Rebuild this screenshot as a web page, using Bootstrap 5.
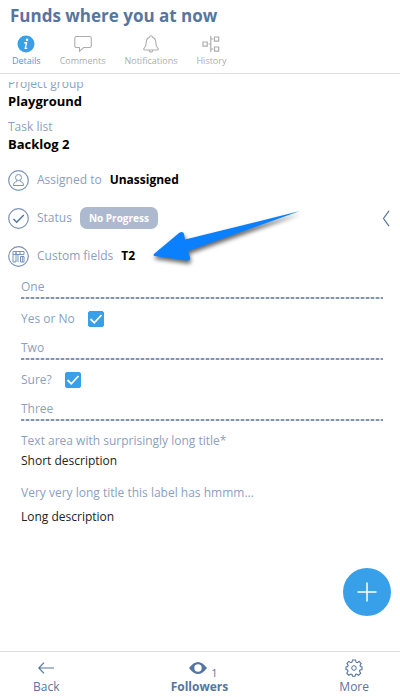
<!DOCTYPE html>
<html lang="en">
<head>
<meta charset="utf-8">
<meta name="viewport" content="width=device-width, initial-scale=1">
<title>Funds where you at now</title>
<link href="https://cdn.jsdelivr.net/npm/bootstrap@5.3.0/dist/css/bootstrap.min.css" rel="stylesheet">
<style>
body{font-family:"Open Sans","Noto Sans",sans-serif;font-size:12px;line-height:16px;color:#000;background:#fff}
svg{display:block;fill:none;stroke:currentColor}
.title{font-size:17px;line-height:24px;font-weight:700;color:#56759f}
.top{border-bottom:1px solid #dedede;padding:4px 10px 6px}
.tabs{gap:19px;margin:7px 2px 0}
.tab{font-size:9px;line-height:12px;color:#adadad;gap:2px}
.tab.active,.tab:hover{color:#37a0e8}
.pane{margin-top:8px}
.scrolled{margin-top:-6px;padding:0 8px}
.muted{color:#8b9fbf}
.strong{font-size:13px;line-height:19px;font-weight:700}
.prop{height:38px;gap:8px}
.ring{width:21px;height:21px;color:#7c93b8}
.status{background:#adb9ce;color:#fff;border:0;border-radius:7px;font-size:10px;line-height:16px;font-weight:700;padding:3px 9px}
.back-chev{color:#56759f;margin-right:2px}
.props{padding-top:7px}
.fields{padding:3px 9px 0 13px}
.line{height:21px;padding-top:1px;background:repeating-linear-gradient(90deg,#7f94b8 0 3px,#d5dce8 3px 5px) left bottom/100% 2px no-repeat}
.check-row{height:40px;gap:13px}
.form-check-input.tick{width:16px;height:16px;margin:0;border-radius:2px}
.tick:checked{background-color:#37a0e8;border-color:#37a0e8;background-size:16px;background-image:url("data:image/svg+xml,%3Csvg xmlns='http://www.w3.org/2000/svg' viewBox='0 0 16 16'%3E%3Cpath d='M2.500 8l3.800 3.800L13.500 4' fill='none' stroke='%23fff' stroke-width='1.800'/%3E%3C/svg%3E")}
.long{color:#222}
.fab{width:48px;height:48px;right:9px;bottom:35px;background:#37a0e8;color:#fff}
.pointer{left:145px;top:120px;pointer-events:none;filter:drop-shadow(1px 3px 2px #0009)}
.bottom{border-top:1px solid #dedede;padding:6px 31px 2px 33px}
.act{color:#56759f;gap:2px}
.act-icon{height:19px}
.count{font-size:11px;line-height:8px}
</style>
</head>
<body>
<div class="vh-100 d-flex flex-column overflow-hidden">
  <header class="top">
    <h1 class="title mb-0">Funds where you at now</h1>
    <nav class="tabs d-flex" aria-label="Sections">
      <a href="#" class="tab active d-flex flex-column align-items-center text-decoration-none">
        <svg width="18" height="18" viewBox="0 0 18 18"><circle cx="9" cy="9" r="8.5" fill="#37a0e8" stroke="none"/><circle cx="10" cy="4.8" r="1.3" fill="#fff" stroke="none"/><path d="M7.2 7.8h2.3l-1.2 5.6h1.9" stroke="#fff" stroke-width="1.4"/></svg>
        <span>Details</span></a>
      <a href="#" class="tab d-flex flex-column align-items-center text-decoration-none">
        <svg width="18" height="18" viewBox="0 0 18 18"><path d="M2.5 1.5h13q1.8 0 1.8 1.8v7.4q0 1.8-1.8 1.8H9.6L5.5 16.3v-3.8h-3Q.8 12.500.8 10.700V3.300Q.8 1.500 2.500 1.500z" stroke-width="1.1"/></svg>
        <span>Comments</span></a>
      <a href="#" class="tab d-flex flex-column align-items-center text-decoration-none">
        <svg width="18" height="18" viewBox="0 0 18 18"><path d="M7.600 2.200a1.400 1.400 0 0 1 2.800 0C13 3 13.800 5 13.800 7.500c0 3.500.7 4.500 2 5.600.9.900.5 1.900-.6 1.900H2.800c-1.100 0-1.500-1-.6-1.900 1.300-1.100 2-2.100 2-5.600C4.200 5 5 3 7.600 2.200zM7 15c.2 2.800 3.800 2.800 4 0" stroke-width="1.1"/></svg>
        <span>Notifications</span></a>
      <a href="#" class="tab d-flex flex-column align-items-center text-decoration-none">
        <svg width="18" height="18" viewBox="0 0 18 18"><path d="M1 7h4.200v4.200H1zM12.500 2h4.200v4.200h-4.200zM12.500 12h4.200v4.200h-4.200zM8.800 1v16M6.500 9h2.300M8.800 4h2.500M8.800 14h2.500" stroke-width="1.200"/></svg>
        <span>History</span></a>
    </nav>
  </header>

  <main class="pane flex-grow-1 overflow-hidden position-relative">
    <div class="scrolled">
      <div class="muted">Project group</div>
      <div class="strong">Playground</div>
      <div class="muted mt-2">Task list</div>
      <div class="strong">Backlog 2</div>
      <div class="props">
        <div class="prop d-flex align-items-center">
          <svg class="ring" viewBox="0 0 21 21"><circle cx="10.500" cy="10.500" r="9.800" stroke-width="1.200"/><circle cx="10.500" cy="7.500" r="3"/><path d="M8.800 10.200v1.300c-2.400.5-3.300 1.600-3.300 4h10c0-2.400-.9-3.500-3.300-4v-1.300"/></svg>
          <span class="muted">Assigned to</span><span class="fw-bold">Unassigned</span>
        </div>
        <div class="prop d-flex align-items-center">
          <svg class="ring" viewBox="0 0 21 21"><circle cx="10.500" cy="10.500" r="9.800" stroke-width="1.200"/><path d="M5.500 11l3.200 3.200L15.800 7" stroke="#56759f" stroke-width="1.500"/></svg>
          <span class="muted">Status</span><button type="button" class="status">No Progress</button>
          <a href="#" class="back-chev ms-auto" aria-label="Open panel"><svg width="8" height="17" viewBox="0 0 8 17"><path d="M7 .8L1.500 8.500 7 16.200" stroke-width="1.200"/></svg></a>
        </div>
        <div class="prop d-flex align-items-center">
          <svg class="ring" viewBox="0 0 21 21"><circle cx="10.500" cy="10.500" r="9.800" stroke-width="1.200"/><path d="M5 5.500h3v10.500H5zM8 5.500h8v3H8zM10 8.500V16M12.500 10.500h3.500V16h-3.500zM14.300 10.500V16M5 8.500h3M12 5.500v3"/></svg>
          <span class="muted">Custom fields</span><span class="fw-bold">T2</span>
        </div>
      </div>
      <div class="fields muted">
        <div class="line">One</div>
        <div class="check-row d-flex align-items-center"><label for="yesno">Yes or No</label><input class="form-check-input tick" type="checkbox" id="yesno" checked></div>
        <div class="line">Two</div>
        <div class="check-row d-flex align-items-center"><label for="sure">Sure?</label><input class="form-check-input tick" type="checkbox" id="sure" checked></div>
        <div class="line">Three</div>
        <div class="pt-2 mt-1">Text area with surprisingly long title*</div>
        <div class="long mt-1">Short description</div>
        <div class="pt-3">Very very long title this label has hmmm...</div>
        <div class="long mt-2">Long description</div>
      </div>
    </div>
    <svg class="pointer position-absolute" width="165" height="70" viewBox="0 0 165 70" aria-hidden="true"><path d="M9.500 54Q7.500 53 9.500 51.500L34 31Q38 28.500 39 32L40 37.500 155 9 43 49 45 55.500Q45.500 59 41 58.500z" fill="#0a80ff" stroke="none"/></svg>
    <button type="button" class="fab btn rounded-circle position-absolute p-0 d-flex align-items-center justify-content-center" aria-label="Add"><svg width="20" height="20" viewBox="0 0 20 20"><path d="M10 .5v19M.5 10h19" stroke-width="1.500"/></svg></button>
  </main>

  <footer class="bottom d-flex justify-content-between">
    <a href="#" class="act d-flex flex-column align-items-center text-decoration-none">
      <span class="act-icon d-flex align-items-center"><svg width="16" height="12" viewBox="0 0 16 12"><path d="M6 .7L.8 6 6 11.300M.8 6H16" stroke-width="1.200"/></svg></span><span>Back</span></a>
    <a href="#" class="act d-flex flex-column align-items-center text-decoration-none">
      <span class="act-icon d-flex align-items-end gap-1 ps-2"><svg class="align-self-center" width="18" height="12" viewBox="0 0 18 12"><path fill-rule="evenodd" d="M0 6Q9-6 18 6 9 18 0 6zM9 2.300a3.700 3.700 0 1 0 0 7.400 3.700 3.700 0 0 0 0-7.400z" fill="currentColor" stroke="none"/></svg><span class="count">1</span></span><span class="fw-bold">Followers</span></a>
    <a href="#" class="act d-flex flex-column align-items-center text-decoration-none">
      <span class="act-icon d-flex align-items-center"><svg width="18" height="18" viewBox="0 0 18 18"><circle cx="9" cy="9" r="2.300"/><path d="M7.500 1h3l.5 2.200 1.200.5 2-1.200 2 2-1.200 2 .5 1.100L17 8v2.500l-2 .5-.5 1.200 1.200 2-2 2-2-1.200-1.200.5-.5 1.800h-2.500L7 15.500 5.800 15l-2 1.200-2-2L3 12.200 2.500 11 1 10.500V8l1.700-.5.5-1.100-1.300-2 2-2 2 1.300L7 3.200z" stroke-width="1.100"/></svg></span><span>More</span></a>
  </footer>
</div>
<script src="https://cdn.jsdelivr.net/npm/bootstrap@5.3.0/dist/js/bootstrap.bundle.min.js"></script>
</body>
</html>
